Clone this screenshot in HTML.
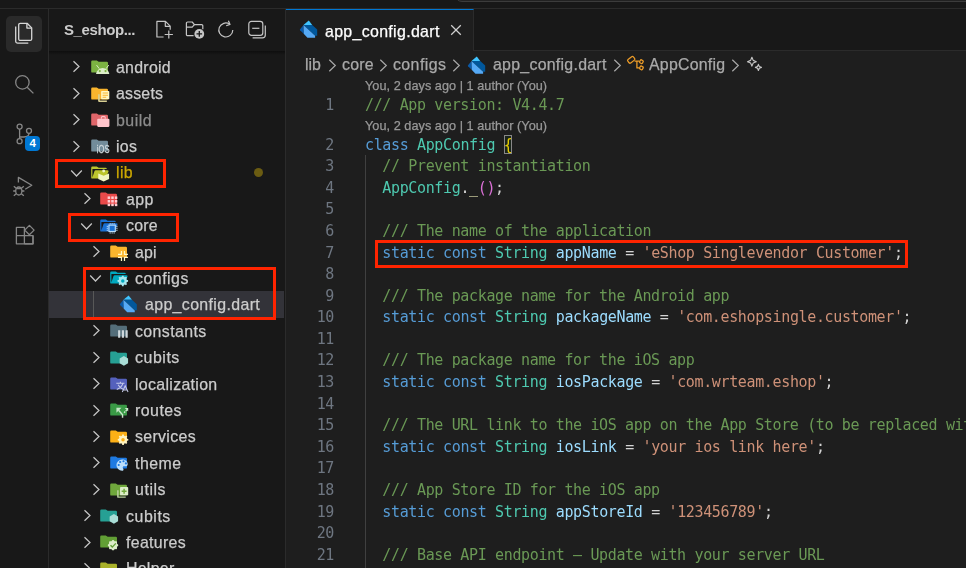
<!DOCTYPE html>
<html lang="en">
<head>
<meta charset="utf-8">
<title>app_config.dart</title>
<style>
*{box-sizing:border-box;margin:0;padding:0}
html,body{width:966px;height:568px;overflow:hidden;background:#181818}
body{position:relative;font-family:"Liberation Sans",sans-serif;color:#cccccc;-webkit-font-smoothing:antialiased}
.abs{position:absolute}
.lbl,.cl,.ln,.lens,#crumbs span,#tabname,#sidetitle{will-change:transform}
.lbl,#crumbs span,#tabname,.lens{-webkit-text-stroke:0.25px}
#titlebar{left:0;top:0;width:966px;height:9px;background:#181818;border-bottom:1px solid #2b2b2b}
#cmd{left:455px;top:-20px;width:560px;height:22px;border:1px solid #3c3c3c;border-radius:7px;background:#222222}
#activity{left:0;top:9px;width:49px;height:559px;background:#181818;border-right:1px solid #2b2b2b}
#actsel{left:6px;top:7px;width:36px;height:36px;border-radius:5px;background:#2a2a2a}
#sidebar{left:49px;top:9px;width:237px;height:559px;background:#181818;border-right:1px solid #2b2b2b;overflow:hidden}
#sidehead{left:0;top:0;width:236px;height:42px;background:#181818}
#sideshadow{left:0;top:42px;width:236px;height:4px;background:linear-gradient(#0e0e0e,#151515 70%,rgba(24,24,24,0))}
#sidetitle{left:15px;top:11px;font-size:15px;font-weight:bold;color:#cccccc;letter-spacing:-0.4px;line-height:20px;white-space:nowrap}
.row{position:absolute;left:0;width:235px;height:26.4px;line-height:26.4px;font-size:15.9px;white-space:nowrap;color:#cccccc}
.row .lbl{position:absolute;top:1px}
.row svg{position:absolute}
.sel{background:#333339}
.redbox{position:absolute;border:3px solid #ff2400;pointer-events:none}
#editor{left:286px;top:9px;width:680px;height:559px;background:#1e1e1e;overflow:hidden}
#tabbar{left:0;top:0;width:680px;height:42px;background:#181818;border-bottom:1px solid #2b2b2b}
#tab{left:0;top:0;width:188px;height:42px;background:#1e1e1e;border-top:1px solid #0078d4;border-right:1px solid #2b2b2b}
#tabname{left:38.7px;top:11.5px;letter-spacing:0.34px;font-size:15.9px;line-height:20px;color:#ffffff;white-space:nowrap}
#crumbs{left:0;top:43.4px;width:680px;height:26px;font-size:15.9px;line-height:26px;color:#a9a9a9;white-space:nowrap}
#crumbs span{position:absolute;top:0}
#code{left:0;top:0;width:680px;height:559px;font-family:"DejaVu Sans Mono","Liberation Mono",monospace;font-size:15px;letter-spacing:-0.361px;white-space:pre}
.ln{position:absolute;left:0;width:48px;text-align:right;color:#6e7681;height:21.6px;line-height:21.6px}
.cl{position:absolute;left:79px;height:21.6px;line-height:21.6px;color:#d4d4d4}
.lens{position:absolute;left:79.4px;letter-spacing:0.04px;font-family:"Liberation Sans",sans-serif;font-size:12.7px;color:#999999;height:18px;line-height:18px;white-space:nowrap}
.bm{position:relative}
.bm::before{content:'';position:absolute;left:0;top:-1.4px;width:100%;height:19.2px;border:1px solid #888888;background:rgba(0,100,0,0.1);box-sizing:border-box}
.c{color:#6a9955}.k{color:#569cd6}.t{color:#4ec9b0}.v{color:#9cdcfe}.s{color:#ce9178}.f{color:#dcdcaa}.b1{color:#ffd700}.b2{color:#da70d6}
#guide{left:79px;top:146px;width:1px;height:420px;background:#404040}
</style>
</head>
<body>
<div id="titlebar" class="abs"><div id="cmd" class="abs"></div></div>

<div id="activity" class="abs">
  <div id="actsel" class="abs"></div>
  <svg class="abs" style="left:12px;top:13px" width="24" height="24" viewBox="0 0 24 24" fill="none" stroke="#d7d7d7" stroke-width="1.300" stroke-linejoin="round"><path d="M8.200 1.300h6.900l4.600 4.600v11a1.500 1.500 0 0 1-1.500 1.500H8.200a1.500 1.500 0 0 1-1.500-1.500V2.800a1.500 1.500 0 0 1 1.500-1.500Z"/><path d="M14.900 1.500v4.600h4.600"/><path d="M3.700 4.600v14.600a2 2 0 0 0 2 2h10.600"/></svg>
  <svg class="abs" style="left:12px;top:63px" width="24" height="24" viewBox="0 0 24 24" fill="none" stroke="#868686" stroke-width="1.300"><circle cx="10.400" cy="10.400" r="6.700"/><path d="M15.200 15.200L21.400 21.400"/></svg>
  <svg class="abs" style="left:12px;top:113px" width="24" height="24" viewBox="0 0 24 24" fill="none" stroke="#868686" stroke-width="1.300"><circle cx="7.600" cy="4.600" r="2.500"/><circle cx="7.600" cy="19.200" r="2.500"/><circle cx="17" cy="8.800" r="2.500"/><path d="M7.600 7.100v9.600M17 11.300c0 3-2.500 3.700-5 3.700H7.600"/></svg>
  <div class="abs" style="left:25px;top:127px;width:15.400px;height:15.400px;border-radius:4px;background:#0078d4;color:#fff;font-size:11.500px;font-weight:bold;line-height:15.400px;text-align:center">4</div>
  <svg class="abs" style="left:11px;top:164px" width="24" height="24" viewBox="0 0 24 24" fill="none" stroke="#868686" stroke-width="1.300" stroke-linejoin="round"><path d="M7.400 9.400V4.400l13.400 7.800l-6.600 4"/><ellipse cx="7.800" cy="18" rx="3.100" ry="4"/><path d="M5.200 15.200L2.800 13.200M10.400 15.200l2.400-2M4.700 18H2.200M10.900 18h2.500M5.200 20.800L2.800 22.800M10.400 20.800l2.400 2M5.400 15.600h4.800"/></svg>
  <svg class="abs" style="left:12px;top:213px" width="24" height="24" viewBox="0 0 24 24" fill="none" stroke="#868686" stroke-width="1.300" stroke-linejoin="round"><path d="M4.400 5.400h8v16.400h-8zM4.400 13.600h16.600v8.200H4.400"/><path d="M21 13.600v8.200H12.400"/><path d="M17.400 3.400l4.700 4.700l-4.700 4.700l-4.700-4.700z"/></svg>
</div>

<div id="sidebar" class="abs">
  <div class="row" style="top:44.8px"><svg style="left:23.4px;top:6.600px" width="9" height="13" viewBox="0 0 9 13"><path d="M1.500 1.200L7 6.500L1.500 11.800" fill="none" stroke="#c5c5c5" stroke-width="1.250"/></svg><svg style="left:40.8px;top:3.4px;overflow:visible" width="19.200" height="19.200" viewBox="0 0 32 32"><path fill="#7cb342" d="m13.844 7.536-1.288-1.072A2 2 0 0 0 11.276 6H4a2 2 0 0 0-2 2v16a2 2 0 0 0 2 2h24a2 2 0 0 0 2-2V10a2 2 0 0 0-2-2H15.124a2 2 0 0 1-1.28-.464Z"/><path fill="#dcedc8" d="M10 28.400A11.200 11.400 0 0 1 32.200 28.400Z"/><path stroke="#dcedc8" stroke-width="1.600" stroke-linecap="round" d="M11.300 14l3.800 5M30.900 14l-3.800 5" fill="none"/><circle cx="16.300" cy="23.400" r="1.900" fill="#7cb342"/><circle cx="25.900" cy="23.400" r="1.900" fill="#7cb342"/></svg><span class="lbl" style="left:67px;color:#cccccc;letter-spacing:0.27px">android</span></div>
  <div class="row" style="top:71.2px"><svg style="left:23.4px;top:6.600px" width="9" height="13" viewBox="0 0 9 13"><path d="M1.500 1.200L7 6.500L1.500 11.800" fill="none" stroke="#c5c5c5" stroke-width="1.250"/></svg><svg style="left:40.8px;top:3.4px;overflow:visible" width="19.200" height="19.200" viewBox="0 0 32 32"><path fill="#fab52d" d="m13.844 7.536-1.288-1.072A2 2 0 0 0 11.276 6H4a2 2 0 0 0-2 2v16a2 2 0 0 0 2 2h24a2 2 0 0 0 2-2V10a2 2 0 0 0-2-2H15.124a2 2 0 0 1-1.28-.464Z"/><path fill="#d9cf93" d="M13.500 17h2.800v10.400h11.800v2.600h-12.600a2 2 0 0 1-2-2Z"/><rect x="18.600" y="11.800" width="13.600" height="13.600" rx="1.200" fill="#fff9c4"/><path stroke="#fab52d" stroke-width="1.700" d="M21 15.200h9M21 18.600h9M21 22h6" fill="none"/></svg><span class="lbl" style="left:67px;color:#cccccc;letter-spacing:0.21px">assets</span></div>
  <div class="row" style="top:97.6px"><svg style="left:23.4px;top:6.600px" width="9" height="13" viewBox="0 0 9 13"><path d="M1.500 1.200L7 6.500L1.500 11.800" fill="none" stroke="#c5c5c5" stroke-width="1.250"/></svg><svg style="left:40.8px;top:3.4px;overflow:visible" width="19.200" height="19.200" viewBox="0 0 32 32"><path fill="#e0666a" d="m13.844 7.536-1.288-1.072A2 2 0 0 0 11.276 6H4a2 2 0 0 0-2 2v16a2 2 0 0 0 2 2h24a2 2 0 0 0 2-2V10a2 2 0 0 0-2-2H15.124a2 2 0 0 1-1.28-.464Z"/><path fill="#ffc5cb" d="M13.800 14.400h16.800a1.800 1.800 0 0 1 1.800 1.800v10.200a1.800 1.800 0 0 1-1.800 1.800H13.800a1.800 1.800 0 0 1-1.800-1.800V16.200a1.800 1.800 0 0 1 1.800-1.800Z"/><path d="M19 14.800v-2.200a1.600 1.600 0 0 1 1.600-1.600h3.200a1.600 1.600 0 0 1 1.600 1.600V14.800" fill="none" stroke="#ffc5cb" stroke-width="1.900"/></svg><span class="lbl" style="left:67px;color:#8c8c8c;letter-spacing:0.52px">build</span></div>
  <div class="row" style="top:124.0px"><svg style="left:23.4px;top:6.600px" width="9" height="13" viewBox="0 0 9 13"><path d="M1.500 1.200L7 6.500L1.500 11.800" fill="none" stroke="#c5c5c5" stroke-width="1.250"/></svg><svg style="left:40.8px;top:3.4px;overflow:visible" width="19.200" height="19.200" viewBox="0 0 32 32"><path fill="#728c9a" d="m13.844 7.536-1.288-1.072A2 2 0 0 0 11.276 6H4a2 2 0 0 0-2 2v16a2 2 0 0 0 2 2h24a2 2 0 0 0 2-2V10a2 2 0 0 0-2-2H15.124a2 2 0 0 1-1.28-.464Z"/><text x="11.400" y="28.800" font-family="Liberation Sans, sans-serif" font-size="19.500" textLength="21" lengthAdjust="spacingAndGlyphs" fill="#cfd8dc" stroke="#cfd8dc" stroke-width="0.5">iOS</text></svg><span class="lbl" style="left:67px;color:#cccccc;letter-spacing:0.31px">ios</span></div>
  <div class="row" style="top:150.4px"><svg style="left:21.3px;top:9.400px" width="13" height="9" viewBox="0 0 13 9"><path d="M1.200 1.500L6.500 7L11.800 1.500" fill="none" stroke="#c5c5c5" stroke-width="1.250"/></svg><svg style="left:40.8px;top:3.4px;overflow:visible" width="19.200" height="19.200" viewBox="0 0 32 32"><path fill="#bcc52d" d="M28.967 12H9.442a2 2 0 0 0-1.898 1.368L4 24V10h24a2 2 0 0 0-2-2H15.124a2 2 0 0 1-1.28-.464l-1.288-1.072A2 2 0 0 0 11.276 6H4a2 2 0 0 0-2 2v16a2 2 0 0 0 2 2h22l4.805-11.212A2 2 0 0 0 28.967 12Z"/><circle cx="22.8" cy="13.4" r="2.4" fill="#f0f4c3"/><path fill="#f0f4c3" d="M13.8 17.6L22.8 21.4L31.8 17.600V26.600L22.8 30.800L13.8 26.600Z"/></svg><span class="lbl" style="left:67px;color:#cca700;letter-spacing:0.40px">lib</span><span class="abs" style="left:205.400px;top:8.700px;width:9px;height:9px;border-radius:50%;background:#6b5c12"></span></div>
  <div class="row" style="top:176.8px"><svg style="left:33.5px;top:6.600px" width="9" height="13" viewBox="0 0 9 13"><path d="M1.500 1.200L7 6.500L1.500 11.800" fill="none" stroke="#c5c5c5" stroke-width="1.250"/></svg><svg style="left:49.8px;top:3.4px;overflow:visible" width="19.200" height="19.200" viewBox="0 0 32 32"><path fill="#ea4a4a" d="m13.844 7.536-1.288-1.072A2 2 0 0 0 11.276 6H4a2 2 0 0 0-2 2v16a2 2 0 0 0 2 2h24a2 2 0 0 0 2-2V10a2 2 0 0 0-2-2H15.124a2 2 0 0 1-1.28-.464Z"/><rect x="14.4" y="12.4" width="4.2" height="4.2" fill="#ffcdd2"/><rect x="14.4" y="18.4" width="4.2" height="4.2" fill="#ffcdd2"/><rect x="14.4" y="24.4" width="4.2" height="4.2" fill="#ffcdd2"/><rect x="20.4" y="12.4" width="4.2" height="4.2" fill="#ffcdd2"/><rect x="20.4" y="18.4" width="4.2" height="4.2" fill="#ffcdd2"/><rect x="20.4" y="24.4" width="4.2" height="4.2" fill="#ffcdd2"/><rect x="26.4" y="12.4" width="4.2" height="4.2" fill="#ffcdd2"/><rect x="26.4" y="18.4" width="4.2" height="4.2" fill="#ffcdd2"/><rect x="26.4" y="24.4" width="4.2" height="4.2" fill="#ffcdd2"/></svg><span class="lbl" style="left:77px;color:#cccccc;letter-spacing:0.40px">app</span></div>
  <div class="row" style="top:203.2px"><svg style="left:30.9px;top:9.400px" width="13" height="9" viewBox="0 0 13 9"><path d="M1.200 1.500L6.500 7L11.800 1.500" fill="none" stroke="#c5c5c5" stroke-width="1.250"/></svg><svg style="left:49.8px;top:3.4px;overflow:visible" width="19.200" height="19.200" viewBox="0 0 32 32"><path fill="#1a70d2" d="M28.967 12H9.442a2 2 0 0 0-1.898 1.368L4 24V10h24a2 2 0 0 0-2-2H15.124a2 2 0 0 1-1.28-.464l-1.288-1.072A2 2 0 0 0 11.276 6H4a2 2 0 0 0-2 2v16a2 2 0 0 0 2 2h22l4.805-11.212A2 2 0 0 0 28.967 12Z"/><rect x="16.6" y="15.2" width="10.6" height="10.6" fill="none" stroke="#bbdefb" stroke-width="1.9"/><rect x="20" y="18.6" width="3.8" height="3.8" fill="#1a70d2"/><path stroke="#bbdefb" stroke-width="1.5" fill="none" d="M18.6 11.6v2.4M21.9 11.6v2.4M25.2 11.6v2.4M18.6 27v2.4M21.9 27v2.400M25.2 27v2.4M12.8 17.200h2.400M12.8 20.500h2.400M12.8 23.800h2.400M28.600 17.200h2.400M28.600 20.500h2.400M28.600 23.800h2.400"/></svg><span class="lbl" style="left:77px;color:#cccccc;letter-spacing:0.21px">core</span></div>
  <div class="row" style="top:229.6px"><svg style="left:43.3px;top:6.600px" width="9" height="13" viewBox="0 0 9 13"><path d="M1.500 1.200L7 6.500L1.500 11.800" fill="none" stroke="#c5c5c5" stroke-width="1.250"/></svg><svg style="left:59.8px;top:3.4px;overflow:visible" width="19.200" height="19.200" viewBox="0 0 32 32"><path fill="#fab52d" d="m13.844 7.536-1.288-1.072A2 2 0 0 0 11.276 6H4a2 2 0 0 0-2 2v16a2 2 0 0 0 2 2h24a2 2 0 0 0 2-2V10a2 2 0 0 0-2-2H15.124a2 2 0 0 1-1.28-.464Z"/><path fill="none" stroke="#fff9c4" stroke-width="2.1" d="M15 20.800h5.800V15M31.600 20.800h-5.800V15M15 25.800h5.800v5.800M31.600 25.800h-5.800v5.800"/></svg><span class="lbl" style="left:86px;color:#cccccc;letter-spacing:0.10px">api</span></div>
  <div class="row" style="top:256.0px"><svg style="left:40.3px;top:9.400px" width="13" height="9" viewBox="0 0 13 9"><path d="M1.200 1.500L6.500 7L11.800 1.500" fill="none" stroke="#c5c5c5" stroke-width="1.250"/></svg><svg style="left:59.8px;top:3.4px;overflow:visible" width="19.200" height="19.200" viewBox="0 0 32 32"><path fill="#00a9bf" d="M28.967 12H9.442a2 2 0 0 0-1.898 1.368L4 24V10h24a2 2 0 0 0-2-2H15.124a2 2 0 0 1-1.28-.464l-1.288-1.072A2 2 0 0 0 11.276 6H4a2 2 0 0 0-2 2v16a2 2 0 0 0 2 2h22l4.805-11.212A2 2 0 0 0 28.967 12Z"/><path fill="#a6e6ee" fill-rule="evenodd" d="M31.79 20.21 L31.79 22.99 L29.81 23.23 L28.97 25.26 L30.20 26.83 L28.23 28.80 L26.66 27.57 L24.63 28.41 L24.39 30.39 L21.61 30.39 L21.37 28.41 L19.34 27.57 L17.77 28.80 L15.80 26.83 L17.03 25.26 L16.19 23.23 L14.21 22.99 L14.21 20.21 L16.19 19.97 L17.03 17.94 L15.80 16.37 L17.77 14.40 L19.34 15.63 L21.37 14.79 L21.61 12.81 L24.39 12.81 L24.63 14.79 L26.66 15.63 L28.23 14.40 L30.20 16.37 L28.97 17.94 L29.81 19.97Z M20.10 21.60a2.9 2.9 0 1 0 5.8 0a2.9 2.9 0 1 0 -5.8 0Z"/></svg><span class="lbl" style="left:86px;color:#cccccc;letter-spacing:0.51px">configs</span></div>
  <div class="row sel" style="top:282.4px"><svg style="left:70.0px;top:2.9px;overflow:visible" width="19.200" height="19.200" viewBox="0 0 32 32"><path fill="#40c4ff" d="M16 2.400L7.300 9.600H21.600Z"/><path fill="#01579b" d="M7.300 9.600H21.600L29.700 17V27.200H26.300Z"/><path fill="#0b5aa8" d="M7.300 9.600L1.700 16.600a1.400 1.400 0 0 0 .1 1.800L8 24.400Z"/><path fill="#55a9f5" d="M7.300 9.600L26.300 27.400V30.600H13.800L8 24.400Z"/></svg><span class="lbl" style="left:96px;color:#cccccc;letter-spacing:0.37px">app_config.dart</span></div>
  <div class="row" style="top:308.8px"><svg style="left:43.3px;top:6.600px" width="9" height="13" viewBox="0 0 9 13"><path d="M1.500 1.200L7 6.500L1.500 11.800" fill="none" stroke="#c5c5c5" stroke-width="1.250"/></svg><svg style="left:59.8px;top:3.4px;overflow:visible" width="19.200" height="19.200" viewBox="0 0 32 32"><path fill="#546e7a" d="m13.844 7.536-1.288-1.072A2 2 0 0 0 11.276 6H4a2 2 0 0 0-2 2v16a2 2 0 0 0 2 2h24a2 2 0 0 0 2-2V10a2 2 0 0 0-2-2H15.124a2 2 0 0 1-1.28-.464Z"/><path fill="#cfd8dc" d="M15.200 15.400h3.600v12.600h-3.600zM21.400 15.400h3.600v12.600h-3.600zM27.600 15.400h3.600v12.600h-3.600z"/></svg><span class="lbl" style="left:86px;color:#cccccc;letter-spacing:0.39px">constants</span></div>
  <div class="row" style="top:335.2px"><svg style="left:43.3px;top:6.600px" width="9" height="13" viewBox="0 0 9 13"><path d="M1.500 1.200L7 6.500L1.500 11.800" fill="none" stroke="#c5c5c5" stroke-width="1.250"/></svg><svg style="left:59.8px;top:3.4px;overflow:visible" width="19.200" height="19.200" viewBox="0 0 32 32"><path fill="#26a094" d="m13.844 7.536-1.288-1.072A2 2 0 0 0 11.276 6H4a2 2 0 0 0-2 2v16a2 2 0 0 0 2 2h24a2 2 0 0 0 2-2V10a2 2 0 0 0-2-2H15.124a2 2 0 0 1-1.28-.464Z"/><path fill="#a9ddd6" d="M24.80 13.30 L31.81 17.35 L31.81 25.45 L24.80 29.50 L17.79 25.45 L17.79 17.35Z"/></svg><span class="lbl" style="left:86px;color:#cccccc;letter-spacing:0.56px">cubits</span></div>
  <div class="row" style="top:361.6px"><svg style="left:43.3px;top:6.600px" width="9" height="13" viewBox="0 0 9 13"><path d="M1.500 1.200L7 6.500L1.500 11.800" fill="none" stroke="#c5c5c5" stroke-width="1.250"/></svg><svg style="left:59.8px;top:3.4px;overflow:visible" width="19.200" height="19.200" viewBox="0 0 32 32"><path fill="#5561bd" d="m13.844 7.536-1.288-1.072A2 2 0 0 0 11.276 6H4a2 2 0 0 0-2 2v16a2 2 0 0 0 2 2h24a2 2 0 0 0 2-2V10a2 2 0 0 0-2-2H15.124a2 2 0 0 1-1.28-.464Z"/><g fill="none" stroke="#c5cae9" stroke-width="1.700"><path d="M12.200 15.400h13.600M19 13v2.400M23.400 15.400c-1.200 4.600-4.800 8.200-10.400 10.400M15.200 18c1.600 3.200 4.400 5.800 8.200 7.400"/><path d="M22.200 30l4.800-10.400l4.800 10.400M23.800 26.800h6.400" stroke-width="1.700"/></g></svg><span class="lbl" style="left:86px;color:#cccccc;letter-spacing:0.32px">localization</span></div>
  <div class="row" style="top:388.0px"><svg style="left:43.3px;top:6.600px" width="9" height="13" viewBox="0 0 9 13"><path d="M1.500 1.200L7 6.500L1.500 11.800" fill="none" stroke="#c5c5c5" stroke-width="1.250"/></svg><svg style="left:59.8px;top:3.4px;overflow:visible" width="19.200" height="19.200" viewBox="0 0 32 32"><path fill="#3a9a46" d="m13.844 7.536-1.288-1.072A2 2 0 0 0 11.276 6H4a2 2 0 0 0-2 2v16a2 2 0 0 0 2 2h24a2 2 0 0 0 2-2V10a2 2 0 0 0-2-2H15.124a2 2 0 0 1-1.28-.464Z"/><g fill="none" stroke="#c8e6c9" stroke-width="2.400"><path d="M22.600 29.400v-4.800l-6.600-7.400"/><path d="M25.200 21.200l5-5" stroke-dasharray="2.600 1.200"/></g><path fill="#c8e6c9" d="M12.400 12.800h8.400l-8.400 8.400zM32 13.400v5.600l-5.600-5.600z"/></svg><span class="lbl" style="left:86px;color:#cccccc;letter-spacing:0.47px">routes</span></div>
  <div class="row" style="top:414.4px"><svg style="left:43.3px;top:6.600px" width="9" height="13" viewBox="0 0 9 13"><path d="M1.500 1.200L7 6.500L1.500 11.800" fill="none" stroke="#c5c5c5" stroke-width="1.250"/></svg><svg style="left:59.8px;top:3.4px;overflow:visible" width="19.200" height="19.200" viewBox="0 0 32 32"><path fill="#fdb016" d="m13.844 7.536-1.288-1.072A2 2 0 0 0 11.276 6H4a2 2 0 0 0-2 2v16a2 2 0 0 0 2 2h24a2 2 0 0 0 2-2V10a2 2 0 0 0-2-2H15.124a2 2 0 0 1-1.28-.464Z"/><path fill="#fff3c0" fill-rule="evenodd" d="M32.19 19.81 L32.19 22.59 L30.21 22.83 L29.37 24.86 L30.60 26.43 L28.63 28.40 L27.06 27.17 L25.03 28.01 L24.79 29.99 L22.01 29.99 L21.77 28.01 L19.74 27.17 L18.17 28.40 L16.20 26.43 L17.43 24.86 L16.59 22.83 L14.61 22.59 L14.61 19.81 L16.59 19.57 L17.43 17.54 L16.20 15.97 L18.17 14.00 L19.74 15.23 L21.77 14.39 L22.01 12.41 L24.79 12.41 L25.03 14.39 L27.06 15.23 L28.63 14.00 L30.60 15.97 L29.37 17.54 L30.21 19.57Z M20.50 21.20a2.9 2.9 0 1 0 5.8 0a2.9 2.9 0 1 0 -5.8 0Z"/></svg><span class="lbl" style="left:86px;color:#cccccc;letter-spacing:0.33px">services</span></div>
  <div class="row" style="top:440.8px"><svg style="left:43.3px;top:6.600px" width="9" height="13" viewBox="0 0 9 13"><path d="M1.500 1.200L7 6.500L1.500 11.800" fill="none" stroke="#c5c5c5" stroke-width="1.250"/></svg><svg style="left:59.8px;top:3.4px;overflow:visible" width="19.200" height="19.200" viewBox="0 0 32 32"><path fill="#1e7ae2" d="m13.844 7.536-1.288-1.072A2 2 0 0 0 11.276 6H4a2 2 0 0 0-2 2v16a2 2 0 0 0 2 2h24a2 2 0 0 0 2-2V10a2 2 0 0 0-2-2H15.124a2 2 0 0 1-1.28-.464Z"/><g transform="translate(-0.400 -2.400)"><path fill="#bbdefb" d="M22.200 13.200a9.400 9.400 0 1 0 0 18.800c1.600 0 2.400-1 2.400-2.200c0-.7-.3-1.200-.7-1.700c-.4-.5-.6-.9-.6-1.500c0-1.200 1-2.100 2.200-2.100h2.500c2.200 0 3.600-1.600 3.600-3.500C31.600 16.600 27.400 13.200 22.200 13.200Z"/><g fill="#1e7ae2"><circle cx="16.600" cy="22.400" r="1.800"/><circle cx="19" cy="17.400" r="1.800"/><circle cx="24.600" cy="16.200" r="1.800"/><circle cx="28.600" cy="19.800" r="1.800"/></g></g></svg><span class="lbl" style="left:86px;color:#cccccc;letter-spacing:0.47px">theme</span></div>
  <div class="row" style="top:467.2px"><svg style="left:43.3px;top:6.600px" width="9" height="13" viewBox="0 0 9 13"><path d="M1.500 1.200L7 6.500L1.500 11.800" fill="none" stroke="#c5c5c5" stroke-width="1.250"/></svg><svg style="left:59.8px;top:3.4px;overflow:visible" width="19.200" height="19.200" viewBox="0 0 32 32"><path fill="#70a83c" d="m13.844 7.536-1.288-1.072A2 2 0 0 0 11.276 6H4a2 2 0 0 0-2 2v16a2 2 0 0 0 2 2h24a2 2 0 0 0 2-2V10a2 2 0 0 0-2-2H15.124a2 2 0 0 1-1.28-.464Z"/><path fill="#b7cf9a" d="M13.500 17.200h2.600v10.200h11.800v2.400h-12.400a2 2 0 0 1-2-2Z"/><rect x="18.400" y="11.800" width="13.600" height="13.800" rx="1.400" fill="#dcedc8"/><path stroke="#70a83c" stroke-width="2.400" d="M25.200 14.600v8.200M21.100 18.700h8.200" fill="none"/></svg><span class="lbl" style="left:86px;color:#cccccc;letter-spacing:0.57px">utils</span></div>
  <div class="row" style="top:493.6px"><svg style="left:33.5px;top:6.600px" width="9" height="13" viewBox="0 0 9 13"><path d="M1.500 1.200L7 6.500L1.500 11.800" fill="none" stroke="#c5c5c5" stroke-width="1.250"/></svg><svg style="left:49.8px;top:3.4px;overflow:visible" width="19.200" height="19.200" viewBox="0 0 32 32"><path fill="#26a094" d="m13.844 7.536-1.288-1.072A2 2 0 0 0 11.276 6H4a2 2 0 0 0-2 2v16a2 2 0 0 0 2 2h24a2 2 0 0 0 2-2V10a2 2 0 0 0-2-2H15.124a2 2 0 0 1-1.28-.464Z"/><path fill="#a9ddd6" d="M24.80 13.30 L31.81 17.35 L31.81 25.45 L24.80 29.50 L17.79 25.45 L17.79 17.35Z"/></svg><span class="lbl" style="left:77px;color:#cccccc;letter-spacing:0.56px">cubits</span></div>
  <div class="row" style="top:520.0px"><svg style="left:33.5px;top:6.600px" width="9" height="13" viewBox="0 0 9 13"><path d="M1.500 1.200L7 6.500L1.500 11.800" fill="none" stroke="#c5c5c5" stroke-width="1.250"/></svg><svg style="left:49.8px;top:3.4px;overflow:visible" width="19.200" height="19.200" viewBox="0 0 32 32"><path fill="#629f35" d="m13.844 7.536-1.288-1.072A2 2 0 0 0 11.276 6H4a2 2 0 0 0-2 2v16a2 2 0 0 0 2 2h24a2 2 0 0 0 2-2V10a2 2 0 0 0-2-2H15.124a2 2 0 0 1-1.28-.464Z"/><path fill="#dcedc8" d="M32.20 22.00 L31.92 22.84 L31.25 23.56 L30.51 24.16 L30.05 24.76 L29.96 25.50 L30.05 26.44 L30.02 27.43 L29.62 28.22 L28.83 28.62 L27.84 28.65 L26.90 28.56 L26.16 28.65 L25.56 29.11 L24.96 29.85 L24.24 30.52 L23.40 30.80 L22.56 30.52 L21.84 29.85 L21.24 29.11 L20.64 28.65 L19.90 28.56 L18.96 28.65 L17.97 28.62 L17.18 28.22 L16.78 27.43 L16.75 26.44 L16.84 25.50 L16.75 24.76 L16.29 24.16 L15.55 23.56 L14.88 22.84 L14.60 22.00 L14.88 21.16 L15.55 20.44 L16.29 19.84 L16.75 19.24 L16.84 18.50 L16.75 17.56 L16.78 16.57 L17.18 15.78 L17.97 15.38 L18.96 15.35 L19.90 15.44 L20.64 15.35 L21.24 14.89 L21.84 14.15 L22.56 13.48 L23.40 13.20 L24.24 13.48 L24.96 14.15 L25.56 14.89 L26.16 15.35 L26.90 15.44 L27.84 15.35 L28.83 15.38 L29.62 15.78 L30.02 16.57 L30.05 17.56 L29.96 18.50 L30.05 19.24 L30.51 19.84 L31.25 20.44 L31.92 21.16Z"/><path fill="none" stroke="#629f35" stroke-width="2.300" d="M19.200 22.200l3 3l5.800-6.200"/></svg><span class="lbl" style="left:77px;color:#cccccc;letter-spacing:0.33px">features</span></div>
  <div class="row" style="top:546.4px"><svg style="left:33.5px;top:6.600px" width="9" height="13" viewBox="0 0 9 13"><path d="M1.500 1.200L7 6.500L1.500 11.800" fill="none" stroke="#c5c5c5" stroke-width="1.250"/></svg><svg style="left:49.8px;top:3.4px;overflow:visible" width="19.200" height="19.200" viewBox="0 0 32 32"><path fill="#a9b12a" d="m13.844 7.536-1.288-1.072A2 2 0 0 0 11.276 6H4a2 2 0 0 0-2 2v16a2 2 0 0 0 2 2h24a2 2 0 0 0 2-2V10a2 2 0 0 0-2-2H15.124a2 2 0 0 1-1.28-.464Z"/><circle cx="24" cy="23" r="4" fill="#f0f4c3"/></svg><span class="lbl" style="left:77px;color:#cccccc;letter-spacing:0.28px">Helper</span></div>
  <div class="abs" style="left:43.6px;top:282.4px;width:1px;height:26.400px;background:#585858"></div>
  <div class="redbox" style="left:5.7px;top:150.2px;width:111.800px;height:28.800px"></div>
  <div class="redbox" style="left:18.9px;top:204.4px;width:111px;height:28.600px"></div>
  <div class="redbox" style="left:34.2px;top:257.7px;width:193px;height:53.200px"></div>
  <div id="sidehead" class="abs">
    <div id="sidetitle" class="abs">S_eshop...</div>
    <svg class="abs" style="left:105px;top:10px" width="22" height="22" viewBox="0 0 22 22" fill="none" stroke="#c5c5c5" stroke-width="1.200" stroke-linejoin="round"><path d="M9.600 18H2.900V2.400h8.600l4.700 4.700v3.700"/><path d="M11.300 2.600v4.700h4.700"/><path d="M14.800 11.400v8.200M10.700 15.500h8.200"/></svg>
    <svg class="abs" style="left:135px;top:10px" width="22" height="22" viewBox="0 0 22 22" fill="none" stroke="#c5c5c5" stroke-width="1.200" stroke-linejoin="round"><path d="M9.600 16.600H3.600a1.200 1.200 0 0 1-1.200-1.200V4.200a1.200 1.200 0 0 1 1.200-1.200h4.600l2.200 2.600h7.200a1.200 1.200 0 0 1 1.200 1.200v3.400"/><path d="M2.600 8.200h5.600l2.200-2.600"/><circle cx="15.300" cy="14.900" r="4.900" fill="#c5c5c5" stroke="none"/><path d="M15.300 12.100v5.600M12.500 14.900h5.600" stroke="#181818" stroke-width="1.300"/></svg>
    <svg class="abs" style="left:166px;top:10px" width="22" height="22" viewBox="0 0 22 22" fill="none" stroke="#c5c5c5" stroke-width="1.200" stroke-linejoin="round"><path d="M17.800 11a7 7 0 1 1-3.200-5.900"/><path d="M13.400 1.800l1.600 3.600l-3.800 1.400"/></svg>
    <svg class="abs" style="left:197px;top:10px" width="22" height="22" viewBox="0 0 22 22" fill="none" stroke="#c5c5c5" stroke-width="1.200" stroke-linejoin="round"><rect x="2.800" y="2.300" width="14" height="14" rx="2.600"/><path d="M6.200 9.300h7.200"/><path d="M19.300 6.400v9.600a2.800 2.800 0 0 1-2.800 2.800H6.600"/></svg>
  </div>
  <div id="sideshadow" class="abs"></div>
</div>

<div id="editor" class="abs">
  <div id="tabbar" class="abs">
    <div id="tab" class="abs">
      <svg class="abs" style="left:12.700px;top:9.300px" width="19.600" height="19.600" viewBox="0 0 32 32"><path fill="#40c4ff" d="M16 2.400L7.300 9.600H21.600Z"/><path fill="#01579b" d="M7.300 9.600H21.600L29.700 17V27.200H26.300Z"/><path fill="#0b5aa8" d="M7.300 9.600L1.700 16.600a1.400 1.400 0 0 0 .1 1.800L8 24.400Z"/><path fill="#55a9f5" d="M7.300 9.600L26.300 27.400V30.600H13.800L8 24.400Z"/></svg>
      <svg class="abs" style="left:163px;top:13px" width="14" height="14" viewBox="0 0 14 14"><path d="M2.200 2.200l9.600 9.600M11.800 2.200l-9.600 9.600" stroke="#d0d0d0" stroke-width="1.250" fill="none"/></svg>
      <div id="tabname" class="abs">app_config.dart</div>
    </div>
  </div>
  <div id="crumbs" class="abs">
    <span style="left:19px">lib</span>
    <svg class="abs" style="left:41.7px;top:7px" width="9" height="13" viewBox="0 0 9 13"><path d="M1.300 0.700L7.300 6.500L1.300 12.300" fill="none" stroke="#a9a9a9" stroke-width="1.200"/></svg>
    <span style="left:55.5px;letter-spacing:0.22px">core</span>
    <svg class="abs" style="left:92.7px;top:7px" width="9" height="13" viewBox="0 0 9 13"><path d="M1.300 0.700L7.300 6.500L1.300 12.300" fill="none" stroke="#a9a9a9" stroke-width="1.200"/></svg>
    <span style="left:106.5px;letter-spacing:0.42px">configs</span>
    <svg class="abs" style="left:166.0px;top:7px" width="9" height="13" viewBox="0 0 9 13"><path d="M1.300 0.700L7.300 6.500L1.300 12.300" fill="none" stroke="#a9a9a9" stroke-width="1.200"/></svg>
    <svg class="abs" style="left:180.8px;top:2.800px" width="19.600" height="19.600" viewBox="0 0 32 32"><path fill="#40c4ff" d="M16 2.400L7.300 9.600H21.600Z"/><path fill="#01579b" d="M7.300 9.600H21.600L29.700 17V27.200H26.300Z"/><path fill="#0b5aa8" d="M7.300 9.600L1.700 16.600a1.400 1.400 0 0 0 .1 1.800L8 24.400Z"/><path fill="#55a9f5" d="M7.300 9.600L26.300 27.400V30.600H13.800L8 24.400Z"/></svg>
    <span style="left:206.5px;letter-spacing:0.27px">app_config.dart</span>
    <svg class="abs" style="left:326.5px;top:7px" width="9" height="13" viewBox="0 0 9 13"><path d="M1.300 0.700L7.300 6.500L1.300 12.300" fill="none" stroke="#a9a9a9" stroke-width="1.200"/></svg>
    <svg class="abs" style="left:340px;top:3px" width="20" height="17" viewBox="0 0 20 17" fill="none" stroke="#ee9d28" stroke-width="1.250" stroke-linejoin="round"><rect x="1.700" y="2.600" width="7" height="4.400" rx="1.200" transform="rotate(-38 5.200 4.800)"/><path d="M8.600 6.100h4.600M10.900 6.100v6.800h2.300"/><rect x="13.800" y="5.100" width="3.200" height="3.200" rx="0.800" transform="rotate(30 15.400 6.700)"/><rect x="13.800" y="11.300" width="3.200" height="3.200" rx="0.800" transform="rotate(30 15.400 12.900)"/></svg>
    <span style="left:363px;letter-spacing:0.22px">AppConfig</span>
    <svg class="abs" style="left:445.0px;top:7px" width="9" height="13" viewBox="0 0 9 13"><path d="M1.300 0.700L7.300 6.500L1.300 12.300" fill="none" stroke="#a9a9a9" stroke-width="1.200"/></svg>
    <svg class="abs" style="left:459px;top:4px" width="20" height="18" viewBox="0 0 20 18" fill="none" stroke="#c5c5c5" stroke-width="1.150" stroke-linejoin="round"><path d="M6.9 1.2999999999999998l1.3 3.1000000000000005l3.1000000000000005 1.3l-3.1000000000000005 1.3l-1.3 3.1000000000000005l-1.3 -3.1000000000000005l-3.1000000000000005 -1.3l3.1000000000000005 -1.3Z"/><path d="M13.4 8.4l0.9 2.1l2.1 0.9l-2.1 0.9l-0.9 2.1l-0.9 -2.1l-2.1 -0.9l2.1 -0.9Z"/></svg>
  </div>
  <div id="code" class="abs">
    <div class="lens" style="top:67.5px">You, 2 days ago | 1 author (You)</div>
    <div class="lens" style="top:108.2px">You, 2 days ago | 1 author (You)</div>
    <div id="guide" class="abs"></div>
    <div class="ln" style="top:85.9px">1</div>
    <div class="cl" style="top:85.9px"><span class="c">/// App version: V4.4.7</span></div>
    <div class="ln" style="top:125.7px">2</div>
    <div class="cl" style="top:125.7px"><span class="k">class</span> <span class="t">AppConfig</span> <span class="b1 bm">{</span></div>
    <div class="ln" style="top:147.3px">3</div>
    <div class="cl" style="top:147.3px">  <span class="c">// Prevent instantiation</span></div>
    <div class="ln" style="top:168.8px">4</div>
    <div class="cl" style="top:168.8px">  <span class="t">AppConfig</span>.<span class="f">_</span><span class="b2">()</span>;</div>
    <div class="ln" style="top:190.4px">5</div>
    <div class="ln" style="top:212.0px">6</div>
    <div class="cl" style="top:212.0px">  <span class="c">/// The name of the application</span></div>
    <div class="ln" style="top:233.6px">7</div>
    <div class="cl" style="top:233.6px">  <span class="k">static</span> <span class="k">const</span> <span class="t">String</span> <span class="v">appName</span> = <span class="s">'eShop Singlevendor Customer'</span>;</div>
    <div class="ln" style="top:255.1px">8</div>
    <div class="ln" style="top:276.7px">9</div>
    <div class="cl" style="top:276.7px">  <span class="c">/// The package name for the Android app</span></div>
    <div class="ln" style="top:298.3px">10</div>
    <div class="cl" style="top:298.3px">  <span class="k">static</span> <span class="k">const</span> <span class="t">String</span> <span class="v">packageName</span> = <span class="s">'com.eshopsingle.customer'</span>;</div>
    <div class="ln" style="top:319.9px">11</div>
    <div class="ln" style="top:341.4px">12</div>
    <div class="cl" style="top:341.4px">  <span class="c">/// The package name for the iOS app</span></div>
    <div class="ln" style="top:363.0px">13</div>
    <div class="cl" style="top:363.0px">  <span class="k">static</span> <span class="k">const</span> <span class="t">String</span> <span class="v">iosPackage</span> = <span class="s">'com.wrteam.eshop'</span>;</div>
    <div class="ln" style="top:384.6px">14</div>
    <div class="ln" style="top:406.2px">15</div>
    <div class="cl" style="top:406.2px">  <span class="c">/// The URL link to the iOS app on the App Store (to be replaced with</span></div>
    <div class="ln" style="top:427.8px">16</div>
    <div class="cl" style="top:427.8px">  <span class="k">static</span> <span class="k">const</span> <span class="t">String</span> <span class="v">iosLink</span> = <span class="s">'your ios link here'</span>;</div>
    <div class="ln" style="top:449.3px">17</div>
    <div class="ln" style="top:470.9px">18</div>
    <div class="cl" style="top:470.9px">  <span class="c">/// App Store ID for the iOS app</span></div>
    <div class="ln" style="top:492.5px">19</div>
    <div class="cl" style="top:492.5px">  <span class="k">static</span> <span class="k">const</span> <span class="t">String</span> <span class="v">appStoreId</span> = <span class="s">'123456789'</span>;</div>
    <div class="ln" style="top:514.0px">20</div>
    <div class="ln" style="top:535.6px">21</div>
    <div class="cl" style="top:535.6px">  <span class="c">/// Base API endpoint – Update with your server URL</span></div>
    <div class="redbox" style="left:89px;top:231px;width:533px;height:28px"></div>
  </div>
</div>
</body>
</html>
